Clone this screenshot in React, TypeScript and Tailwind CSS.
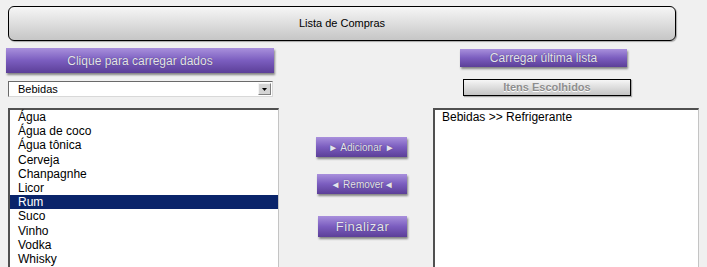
import React from 'react';

const items = ['Água', 'Água de coco', 'Água tônica', 'Cerveja', 'Chanpagnhe', 'Licor', 'Rum', 'Suco', 'Vinho', 'Vodka', 'Whisky'];

const purple =
    'flex items-center justify-center bg-gradient-to-b from-[#a990dc] via-[#7b5dbf] to-[#5c3f98] text-[#e4e4ee] shadow-[1px_2px_2px_rgba(0,0,0,0.45)] [text-shadow:0_0_1px_rgba(0,0,0,0.5)]';

const App: React.FC = () => {
    const selected = 'Rum';

    return (
        <div className="w-[707px] h-[267px] overflow-hidden bg-[#f0f0f0] pt-[6px] font-['Liberation_Sans',Arial,sans-serif]">
            {/* title bar */}
            <div className="ml-[8px] w-[668px] h-[35px] rounded-[6px] border-[1.5px] border-black bg-gradient-to-b from-[#f6f6f6] to-[#c6c6c6] shadow-[1px_1px_1px_rgba(0,0,0,0.3)] flex items-center justify-center text-[11px] text-black">
                Lista de Compras
            </div>

            <div className="flex items-start">
                {/* left column */}
                <div className="ml-[6px] w-[273px] flex flex-col">
                    <button className={`${purple} mt-[7px] w-[268px] h-[25px] text-[12px]`}>
                        Clique para carregar dados
                    </button>
                    <div className="mt-[8px] ml-[2px] w-[265px] h-[16px] bg-white border border-t-[#6a6a6a] border-l-[#6a6a6a] border-r-[#d8d8d8] border-b-[#d8d8d8] flex items-center">
                        <span className="flex-1 pl-[9px] text-[11px] leading-none text-black">Bebidas</span>
                        <span className="w-[13px] h-[12px] mr-[1px] bg-[#d4d4d4] border border-[#f4f4f4] border-r-[#808080] border-b-[#808080] flex items-center justify-center">
                            <svg width="5" height="3" viewBox="0 0 5 3"><path d="M0 0h5L2.5 3z" fill="#000" /></svg>
                        </span>
                    </div>
                    <div className="mt-[11px] ml-[2px] w-[271px] h-[170px] bg-white border-t-2 border-l-2 border-t-[#505050] border-l-[#505050] border-r border-r-[#c4c4c4]">
                        {items.map(item => (
                            <div
                                key={item}
                                className={`h-[14.2px] leading-[14px] pl-[8px] text-[12px] ${item === selected ? 'bg-[#0a246a] text-white' : 'text-black'}`}
                            >
                                {item}
                            </div>
                        ))}
                    </div>
                </div>

                {/* middle column */}
                <div className="ml-[37px] w-[91px] flex flex-col">
                    <button className={`${purple} mt-[96px] w-[91px] h-[20px] text-[10px]`}>► Adicionar ►</button>
                    <button className={`${purple} mt-[17px] ml-[1px] w-[90px] h-[20px] text-[10px]`}>◄ Remover◄</button>
                    <button className={`${purple} mt-[22px] ml-[2px] w-[89px] h-[21px] text-[13px] tracking-[0.5px]`}>Finalizar</button>
                </div>

                {/* right column */}
                <div className="ml-[26px] w-[266px] flex flex-col">
                    <button className={`${purple} mt-[8px] ml-[27px] w-[167px] h-[18px] text-[12px]`}>
                        Carregar última lista
                    </button>
                    <div className="mt-[12px] ml-[30px] w-[168px] h-[17px] border border-black bg-gradient-to-b from-[#f6f6f6] to-[#c4c4c4] shadow-[1px_1px_1px_rgba(0,0,0,0.3)] flex items-center justify-center text-[11px] font-bold text-[#8e8e8e] [text-shadow:0_1px_0_#fff]">
                        Itens Escolhidos
                    </div>
                    <div className="mt-[12px] w-[266px] h-[170px] bg-white border-t-2 border-l-2 border-t-[#505050] border-l-[#505050] border-r border-r-[#c4c4c4] pl-[7px] text-[12px] leading-[14px] text-black">
                        Bebidas &gt;&gt; Refrigerante
                    </div>
                </div>
            </div>
        </div>
    );
};

export default App;
